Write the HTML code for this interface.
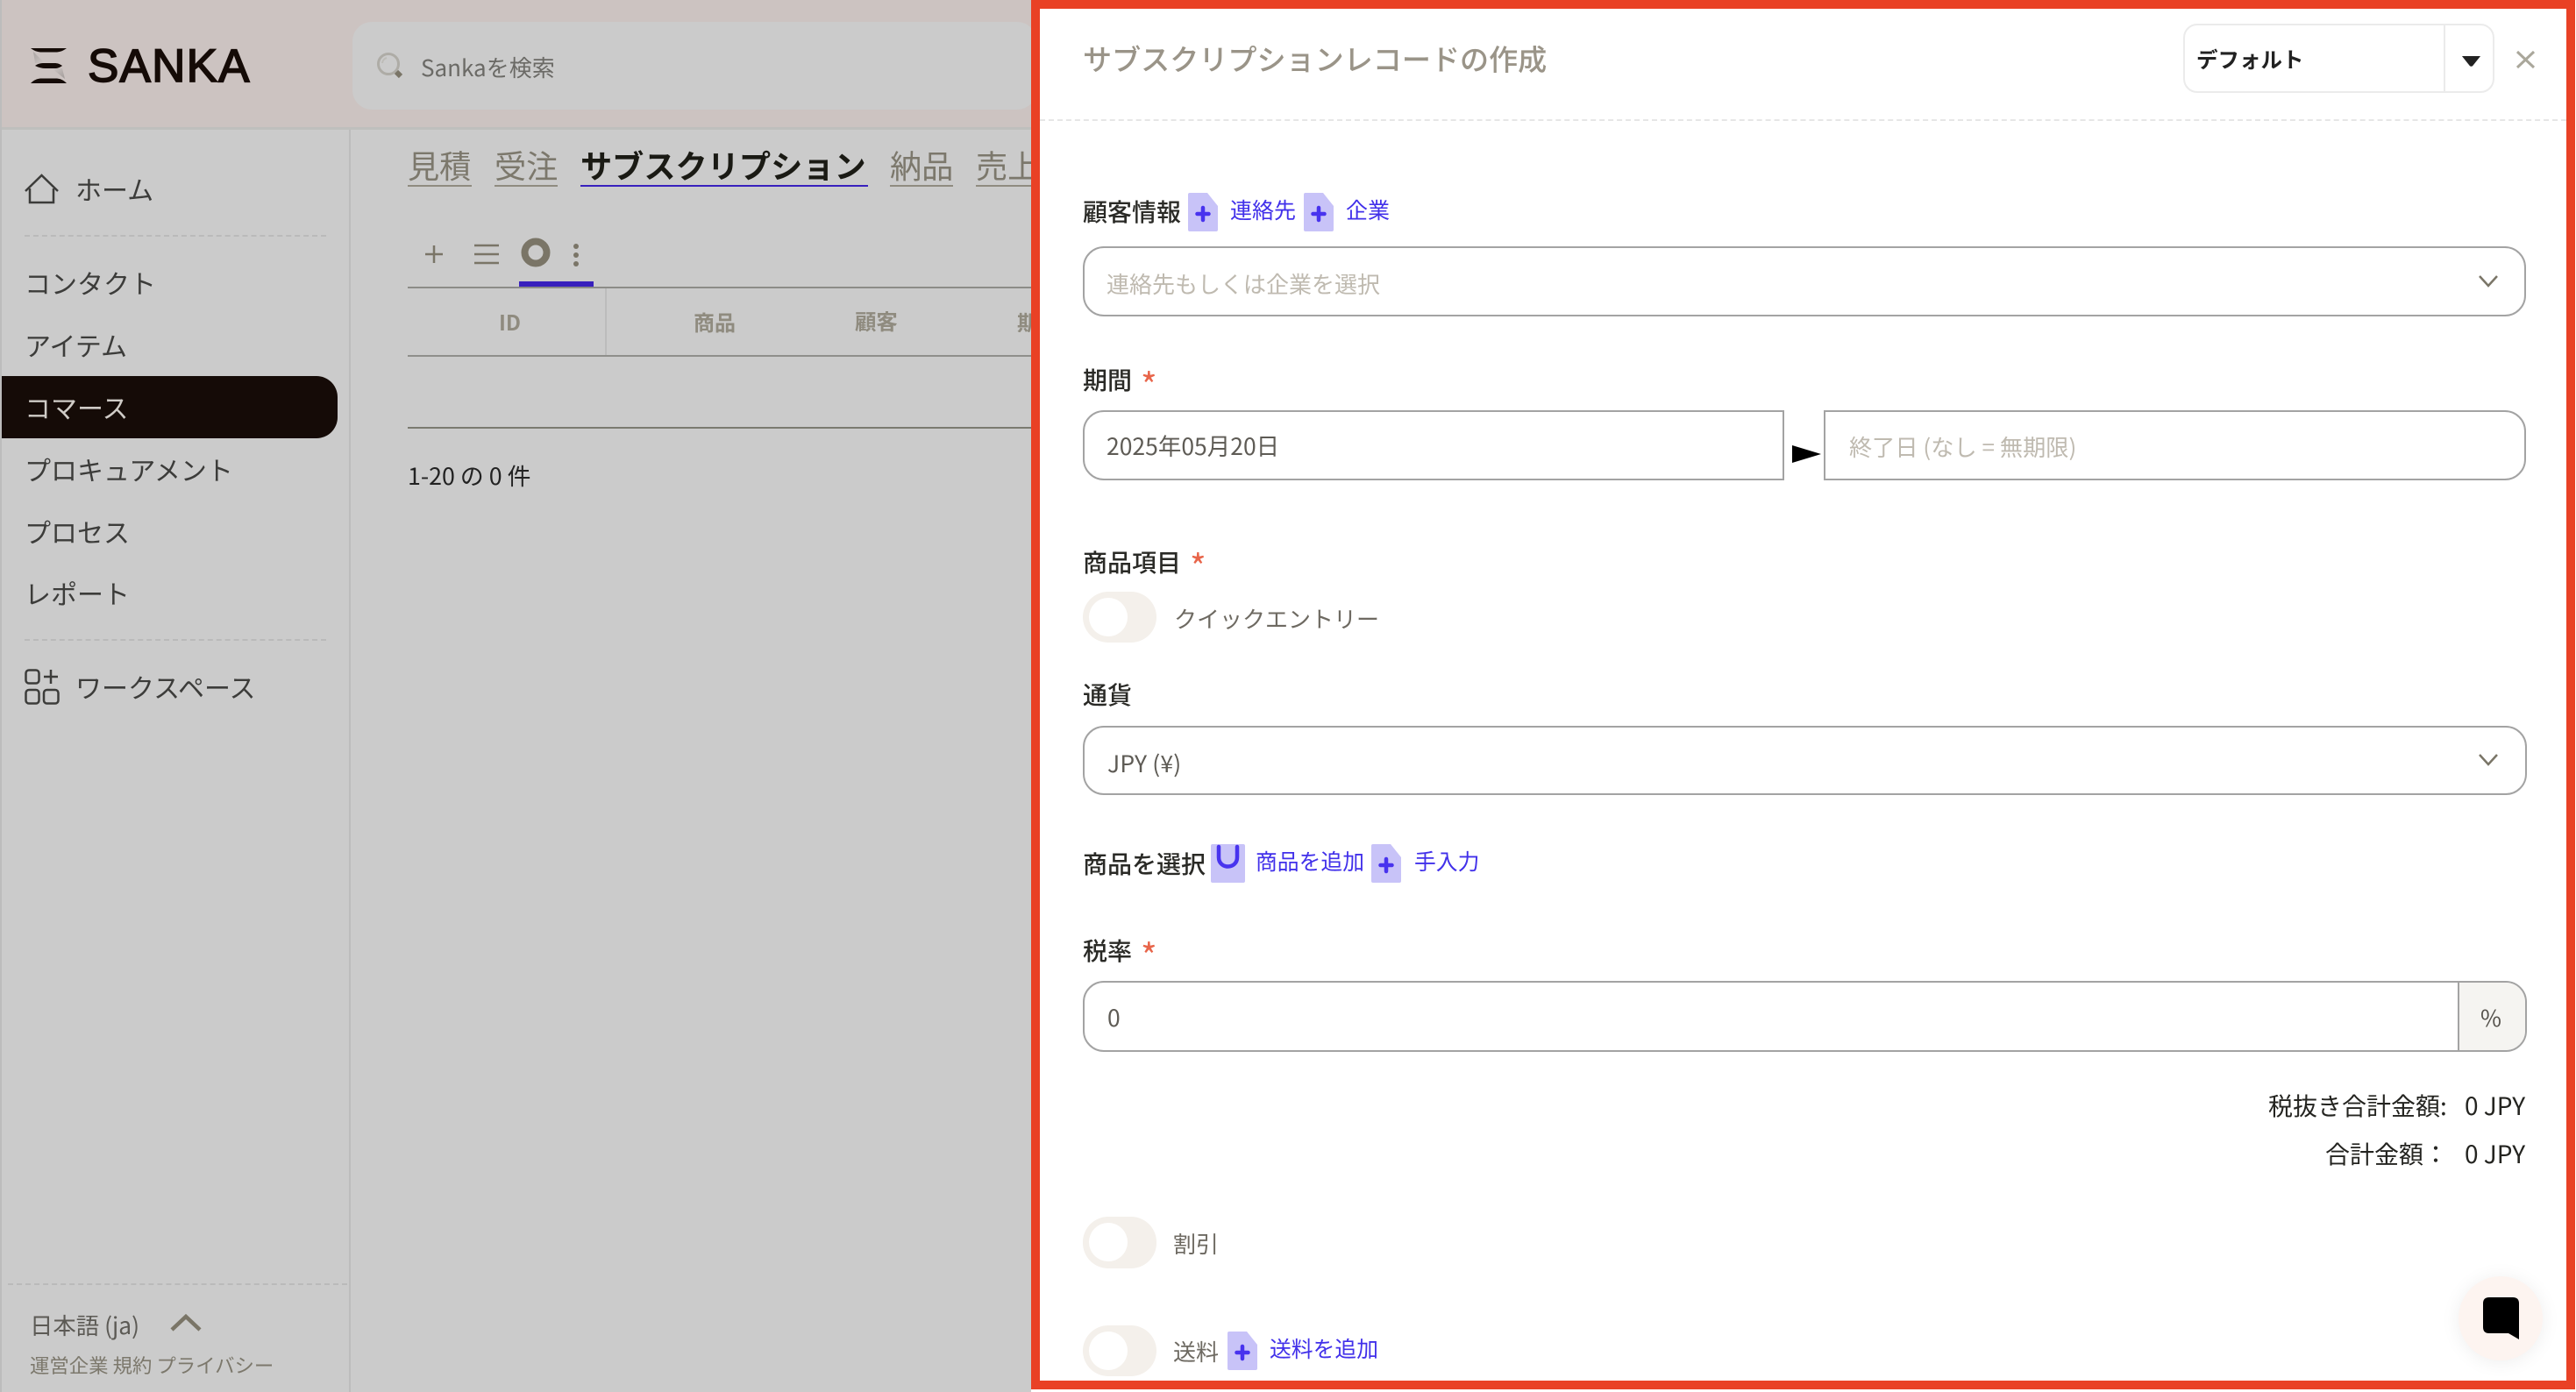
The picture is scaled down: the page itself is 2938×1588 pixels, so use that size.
<!DOCTYPE html>
<html lang="ja"><head><meta charset="utf-8"><title>Sanka</title>
<style>
html,body{margin:0;padding:0;width:2938px;height:1588px;overflow:hidden;background:#cbcbcb}
body{position:relative;font-family:"Liberation Sans","Noto Sans CJK JP",sans-serif}
*{box-sizing:border-box}
.a{position:absolute}
.t{position:absolute;white-space:nowrap;line-height:1;font-family:"Noto Sans CJK JP","Liberation Sans",sans-serif}
.lab{font-size:28px;font-weight:500;color:#2a2a26}
.blue{font-size:25px;color:#4130ea}
.req{font-size:40px;color:#e8654a}
.side{font-size:30px;color:#3c3c3a}
.tab{font-size:36.200px;color:#7c786c;padding-bottom:6px}
.inp{position:absolute;border:2px solid #a3a3a3;background:#fff}
.ph{font-size:26px;color:#bfbab0}
.val{font-size:26.500px;color:#5e5b55}
.tg{position:absolute;left:1235px;width:84px;height:58px;border-radius:29px / 29px;background:#f4f0eb}
.tg i{position:absolute;left:7px;top:7px;width:44px;height:44px;border-radius:50%;background:#fff}
svg{position:absolute;overflow:visible}
</style></head><body>

<!-- header -->
<div class="a" style="left:0;top:0;width:1176px;height:145px;background:#ccc3c1"></div>
<div class="a" style="left:0;top:145px;width:1176px;height:3px;background:#bfbfbd"></div>
<div class="a" style="left:0;top:0;width:2px;height:1588px;background:#bcbcbc"></div>
<div class="a" style="left:402px;top:25px;width:780px;height:100px;border-radius:22px;background:#cbcbcb"></div>

<!-- logo -->
<svg style="left:35px;top:55px" width="41" height="40" viewBox="0 0 41 40">
<defs><linearGradient id="g" x1="0" y1="0" x2="1" y2="1"><stop offset="0" stop-color="#a8a2a0"/><stop offset="1" stop-color="#d0c8c6"/></linearGradient>
<linearGradient id="g2" x1="0" y1="0" x2="1" y2="1"><stop offset="0" stop-color="#d0c8c6"/><stop offset="1" stop-color="#a09a98"/></linearGradient></defs>
<path d="M3 4 L16 17 H5 Z" fill="url(#g)"/>
<path d="M24 23 H36 L39 35 Z" fill="url(#g2)"/>
<path d="M0 0 H41 C37 3 34 4 30 4.500 H11 C7 4 4 3 0 0 Z" fill="#150b07"/>
<path d="M5 20 C9 17 13 17 17 17 H27 C31 17 33 18 36 20 C33 22 31 23 27 23 H17 C13 23 9 22 5 20 Z" fill="#150b07"/>
<path d="M0 40 C4 36 7 35 11 34.500 H30 C34 35 37 36 41 40 Z" fill="#150b07"/>
</svg>
<div class="t" style="left:100px;top:49px;font-family:'Liberation Sans',sans-serif;font-size:53px;letter-spacing:1.200px;color:#150b07;-webkit-text-stroke:1.700px #150b07">SANKA</div>

<!-- search -->
<svg style="left:430px;top:60px" width="32" height="32" viewBox="0 0 32 32">
<circle cx="13" cy="13" r="11.500" fill="none" stroke="#aeaca6" stroke-width="3"/>
<path d="M6 12 A7 7 0 0 1 11 6" fill="none" stroke="#bdbcb7" stroke-width="2"/>
<path d="M22 22 L27 27" stroke="#7a7567" stroke-width="6"/>
</svg>
<div class="t" style="left:480px;top:64px;font-size:26px;color:#6b6a66">Sankaを検索</div>

<!-- sidebar -->
<div class="a" style="left:398px;top:148px;width:2px;height:1440px;background:#bcbcbc"></div>
<svg style="left:28px;top:198px" width="40" height="36" viewBox="0 0 40 36" fill="none" stroke="#3c3c3a" stroke-width="2.500">
<path d="M1 20 L19.500 2 L38 20"/><path d="M6 17 V33 H33 V17"/></svg>
<div class="t side" style="left:86px;top:200px">ホーム</div>
<div class="a" style="left:28px;top:268px;width:344px;border-top:2px dashed #bababa"></div>
<div class="t side" style="left:28px;top:307px">コンタクト</div>
<div class="t side" style="left:28px;top:378px">アイテム</div>
<div class="a" style="left:2px;top:429px;width:383px;height:71px;background:#150b07;border-radius:0 24px 24px 0"></div>
<div class="t side" style="left:28px;top:449px;color:#cfcbc6">コマース</div>
<div class="t side" style="left:28px;top:520px">プロキュアメント</div>
<div class="t side" style="left:28px;top:591px">プロセス</div>
<div class="t side" style="left:28px;top:661px">レポート</div>
<div class="a" style="left:28px;top:729px;width:344px;border-top:2px dashed #bababa"></div>
<svg style="left:28px;top:763px" width="40" height="41" viewBox="0 0 40 41" fill="none" stroke="#3c3c3a" stroke-width="2.500">
<rect x="1.500" y="1.500" width="15" height="15" rx="3.500"/><rect x="1.500" y="24" width="15" height="15.500" rx="3.500"/><rect x="22" y="24" width="16.500" height="15.500" rx="3.500"/>
<path d="M30 1 V17 M22 9 H38"/></svg>
<div class="t side" style="left:86px;top:768px">ワークスペース</div>
<div class="a" style="left:9px;top:1464px;width:387px;border-top:2px dashed #bababa"></div>
<div class="t" style="left:34px;top:1498px;font-size:26.400px;color:#5c5a55">日本語 (ja)</div>
<svg style="left:194px;top:1498px" width="36" height="22" viewBox="0 0 36 22" fill="none" stroke="#7a7567" stroke-width="4.500"><path d="M2 19 L18 4 L34 19"/></svg>
<div class="t" style="left:34px;top:1546px;font-size:22.400px;color:#7c786c">運営企業 規約 プライバシー</div>

<!-- tabs -->
<div class="t tab" style="left:465px;top:170px;border-bottom:2px solid #8f8b80;width:73px;height:43px">見積</div>
<div class="t tab" style="left:564px;top:170px;border-bottom:2px solid #8f8b80;width:72px;height:43px">受注</div>
<div class="t tab" style="left:662px;top:170px;border-bottom:2px solid #3820bd;color:#1a1a14;font-weight:700;width:328px;height:43px">サブスクリプション</div>
<div class="t tab" style="left:1015px;top:170px;border-bottom:2px solid #8f8b80;width:72px;height:43px">納品</div>
<div class="t tab" style="left:1113px;top:170px;border-bottom:2px solid #8f8b80;width:63px;height:43px;overflow:hidden">売上</div>

<!-- toolbar -->
<svg style="left:484px;top:279px" width="22" height="22" fill="none" stroke="#7a7567" stroke-width="2.500"><path d="M11 1 V21 M1 11 H21"/></svg>
<svg style="left:541px;top:278px" width="28" height="24" fill="none" stroke="#7a7567" stroke-width="2.500"><path d="M0 2 H28 M0 12 H28 M0 22 H28"/></svg>
<svg style="left:595px;top:272px" width="32" height="32"><circle cx="16" cy="16" r="12.500" fill="none" stroke="#7a7567" stroke-width="8"/></svg>
<svg style="left:652px;top:276px" width="10" height="30" fill="#7a7567"><circle cx="5" cy="5" r="3"/><circle cx="5" cy="15" r="3"/><circle cx="5" cy="25" r="3"/></svg>
<div class="a" style="left:592px;top:321px;width:85px;height:6px;background:#3820bd"></div>
<div class="a" style="left:465px;top:327px;width:711px;height:2px;background:#8c8c88"></div>
<div class="a" style="left:690px;top:329px;width:2px;height:78px;background:#bcbcbc"></div>
<div class="a" style="left:465px;top:405px;width:711px;height:2px;background:#8f8f8b"></div>
<div class="a" style="left:465px;top:487px;width:711px;height:2px;background:#7a7a70"></div>
<div class="t" style="left:569px;top:355px;font-size:24px;font-weight:700;color:#8f8b7f">ID</div>
<div class="t" style="left:791px;top:355px;font-size:24px;font-weight:700;color:#8f8b7f">商品</div>
<div class="t" style="left:975px;top:355px;font-size:24.400px;font-weight:700;color:#8f8b7f">顧客</div>
<div class="t" style="left:1160px;top:355px;font-size:24px;font-weight:700;color:#8f8b7f;width:16px;overflow:hidden">期間</div>
<div class="t" style="left:465px;top:529px;font-size:26.800px;color:#222">1-20 の 0 件</div>

<!-- panel -->
<div class="a" style="left:1176px;top:0;width:1762px;height:1588px;background:#fff"></div>
<div class="a" style="left:1176px;top:0;width:1761px;height:1585px;border:10px solid #e94125;background:#fff"></div>
<div class="a" style="left:1186px;top:136px;width:1741px;border-top:2px dashed #e6e6e6"></div>
<div class="t" style="left:1235px;top:50px;font-size:33.100px;font-weight:500;color:#9a9488">サブスクリプションレコードの作成</div>

<div class="a" style="left:2490px;top:27px;width:355px;height:79px;border:2px solid #ebebeb;border-radius:16px"></div>
<div class="a" style="left:2787px;top:28px;width:2px;height:77px;background:#ebebeb"></div>
<div class="t" style="left:2505px;top:56px;font-size:24.500px;font-weight:700;color:#222">デフォルト</div>
<svg style="left:2808px;top:63px" width="21" height="13"><path d="M1 1.500 H20 L12 11.500 Q10.500 13 9 11.500 Z" fill="#222" stroke="#222"/></svg>
<svg style="left:2870px;top:58px" width="21" height="20" fill="none" stroke="#aaa79b" stroke-width="3"><path d="M1 1 L20 19 M20 1 L1 19"/></svg>

<!-- customer -->
<div class="t lab" style="left:1235px;top:227px">顧客情報</div>
<svg style="left:1355px;top:220px" width="34" height="44" viewBox="0 0 34 44"><path d="M2 0 H22 L34 15 V42 Q34 44 32 44 H2 Q0 44 0 42 V2 Q0 0 2 0 Z" fill="#c8c3f8"/><path d="M17 17 V31 M10.500 24 H23.500" stroke="#4833ee" stroke-width="4.500" stroke-linecap="round"/></svg>
<div class="t blue" style="left:1403px;top:227px">連絡先</div>
<svg style="left:1487px;top:220px" width="34" height="44" viewBox="0 0 34 44"><path d="M2 0 H22 L34 15 V42 Q34 44 32 44 H2 Q0 44 0 42 V2 Q0 0 2 0 Z" fill="#c8c3f8"/><path d="M17 17 V31 M10.500 24 H23.500" stroke="#4833ee" stroke-width="4.500" stroke-linecap="round"/></svg>
<div class="t blue" style="left:1535px;top:227px">企業</div>
<div class="inp" style="left:1235px;top:281px;width:1646px;height:80px;border-radius:24px"></div>
<div class="t ph" style="left:1262px;top:311px">連絡先もしくは企業を選択</div>
<svg style="left:2827px;top:314px" width="22" height="14" fill="none" stroke="#7a7567" stroke-width="2.500"><path d="M1 1 L11 12 L21 1"/></svg>

<!-- period -->
<div class="t lab" style="left:1235px;top:419px">期間</div>
<div class="t req" style="left:1301px;top:418px">*</div>
<div class="inp" style="left:1235px;top:468px;width:800px;height:80px;border-radius:24px 0 0 24px"></div>
<div class="t val" style="left:1262px;top:495px">2025年05月20日</div>
<svg style="left:2044px;top:508px" width="33" height="20"><path d="M0 0 L33 10 L0 20 Z" fill="#000"/></svg>
<div class="inp" style="left:2080px;top:468px;width:801px;height:80px;border-radius:0 24px 24px 0"></div>
<div class="t ph" style="left:2109px;top:496px;font-size:26.200px">終了日 (なし = 無期限)</div>

<!-- items -->
<div class="t lab" style="left:1235px;top:627px">商品項目</div>
<div class="t req" style="left:1357px;top:625px">*</div>
<div class="tg" style="top:675px"><i></i></div>
<div class="t" style="left:1339px;top:693px;font-size:26px;color:#6e6a62">クイックエントリー</div>
<div class="t lab" style="left:1235px;top:778px">通貨</div>
<div class="inp" style="left:1235px;top:828px;width:1647px;height:79px;border-radius:24px"></div>
<div class="t val" style="left:1263px;top:857px;letter-spacing:.15px">JPY (¥)</div>
<svg style="left:2827px;top:860px" width="22" height="14" fill="none" stroke="#7a7567" stroke-width="2.500"><path d="M1 1 L11 12 L21 1"/></svg>

<div class="t lab" style="left:1235px;top:971px">商品を選択</div>
<svg style="left:1381px;top:963px" width="39" height="44" viewBox="0 0 39 44"><rect width="39" height="44" rx="2" fill="#c8c3f8"/><path d="M9 3 V15 C9 29 30 29 30 15 V3" fill="none" stroke="#4833ee" stroke-width="4.500" stroke-linecap="round"/></svg>
<div class="t blue" style="left:1432px;top:970px;font-size:24.800px">商品を追加</div>
<svg style="left:1564px;top:963px" width="34" height="44" viewBox="0 0 34 44"><path d="M2 0 H22 L34 15 V42 Q34 44 32 44 H2 Q0 44 0 42 V2 Q0 0 2 0 Z" fill="#c8c3f8"/><path d="M17 17 V31 M10.500 24 H23.500" stroke="#4833ee" stroke-width="4.500" stroke-linecap="round"/></svg>
<div class="t blue" style="left:1613px;top:970px;font-size:24.800px">手入力</div>

<!-- tax -->
<div class="t lab" style="left:1235px;top:1070px">税率</div>
<div class="t req" style="left:1301px;top:1069px">*</div>
<div class="inp" style="left:1235px;top:1119px;width:1647px;height:81px;border-radius:24px;overflow:hidden"><div class="a" style="left:1566px;top:0;width:79px;height:77px;background:#f5f4f1;border-left:2px solid #a3a3a3"></div></div>
<div class="t val" style="left:1263px;top:1147px">0</div>
<div class="t" style="left:2829px;top:1148px;font-size:26px;color:#55524c">%</div>

<div class="t" style="left:2587px;top:1247px;font-size:28px;color:#242420">税抜き合計金額:</div>
<div class="t" style="left:2811px;top:1247px;font-size:28px;color:#242420">0 JPY</div>
<div class="t" style="left:2652px;top:1302px;font-size:28px;color:#242420">合計金額：</div>
<div class="t" style="left:2811px;top:1302px;font-size:28px;color:#242420">0 JPY</div>

<!-- toggles -->
<div class="tg" style="top:1388px;height:59px"><i></i></div>
<div class="t" style="left:1338px;top:1406px;font-size:26px;color:#6e6a62">割引</div>
<div class="tg" style="top:1512px"><i></i></div>
<div class="t" style="left:1338px;top:1529px;font-size:26px;color:#6e6a62">送料</div>
<svg style="left:1400px;top:1519px" width="34" height="44" viewBox="0 0 34 44"><path d="M2 0 H22 L34 15 V42 Q34 44 32 44 H2 Q0 44 0 42 V2 Q0 0 2 0 Z" fill="#c8c3f8"/><path d="M17 17 V31 M10.500 24 H23.500" stroke="#4833ee" stroke-width="4.500" stroke-linecap="round"/></svg>
<div class="t blue" style="left:1448px;top:1526px;font-size:24.800px">送料を追加</div>

<!-- chat -->
<div class="a" style="left:2804px;top:1456px;width:96px;height:96px;border-radius:50%;background:#fdf4f0;box-shadow:0 2px 22px rgba(0,0,0,.07)"></div>
<svg style="left:2832px;top:1480px" width="41" height="48" viewBox="0 0 41 48"><path d="M7 0 H34 Q41 0 41 7 V48 L29 41 H7 Q0 41 0 34 V7 Q0 0 7 0 Z" fill="#000"/></svg>
</body></html>
